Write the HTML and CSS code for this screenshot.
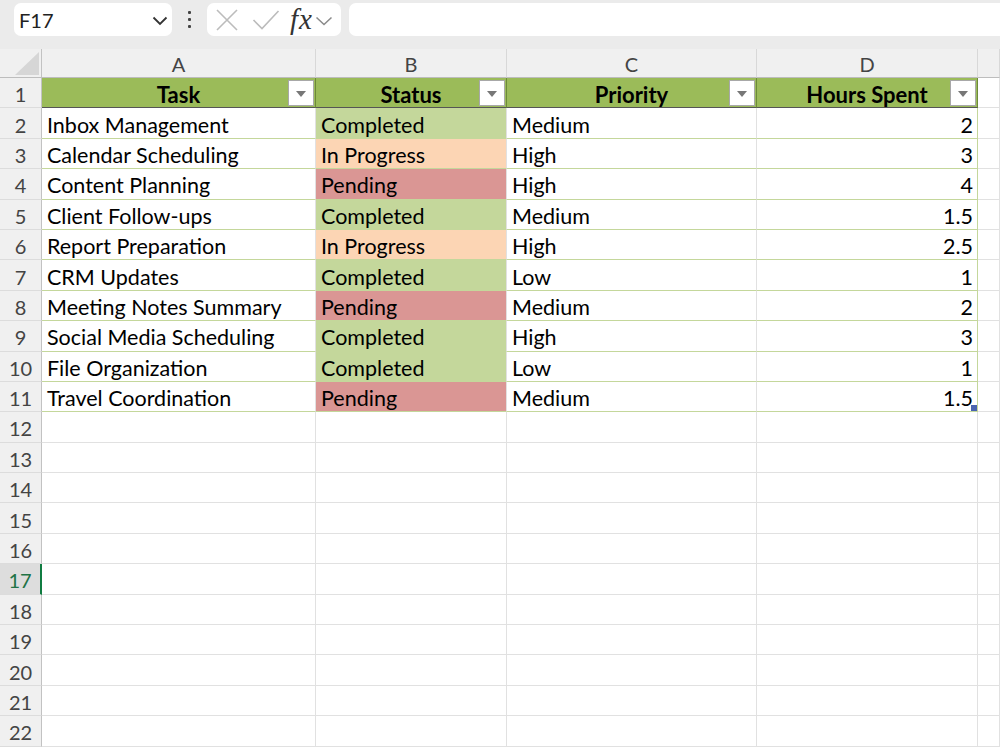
FILE: index.html
```html
<!DOCTYPE html>
<html lang="en">
<head>
    <meta charset="UTF-8">
    <meta name="viewport" content="width=device-width, initial-scale=1.0">
    <title>Task Tracker</title>
    <link rel="stylesheet" href="styles.css">
</head>
<body>
    <!-- formula bar -->
    <div class="toolbar">
        <div class="namebox">
            <span>F17</span>
            <svg class="chev" width="16" height="10" viewBox="0 0 16 10"><path d="M1.5 1.5 L8 8 L14.5 1.5" fill="none" stroke="#333" stroke-width="1.8"/></svg>
        </div>
        <div class="more"><i></i><i></i><i></i></div>
        <div class="fxbox">
            <svg class="ico" width="24" height="24" viewBox="0 0 24 24"><path d="M2 2 L22 22 M22 2 L2 22" stroke="#bcbcbc" stroke-width="1.6"/></svg>
            <svg class="ico" width="28" height="24" viewBox="0 0 28 24"><path d="M1.5 12 L10 20.5 L26.5 3" fill="none" stroke="#bcbcbc" stroke-width="1.6"/></svg>
            <span class="fx">fx</span>
            <svg class="ico small" width="18" height="10" viewBox="0 0 18 10"><path d="M1.5 1.5 L9 8.5 L16.5 1.5" fill="none" stroke="#8a8a8a" stroke-width="1.5"/></svg>
        </div>
        <div class="fbar"></div>
    </div>

    <!-- grid -->
    <div class="sheet">
        <div class="row colhead">
            <div class="rh corner"></div>
            <div class="cell col-a">A</div>
            <div class="cell col-b">B</div>
            <div class="cell col-c">C</div>
            <div class="cell col-d">D</div>
            <div class="cell col-e"></div>
        </div>
        <div class="row">
            <div class="rh">1</div>
            <div class="cell col-a th">Task<span class="filter"></span></div>
            <div class="cell col-b th">Status<span class="filter"></span></div>
            <div class="cell col-c th">Priority<span class="filter"></span></div>
            <div class="cell col-d th">Hours Spent<span class="filter"></span></div>
            <div class="cell col-e"></div>
        </div>
        <div class="row">
            <div class="rh">2</div>
            <div class="cell col-a td">Inbox Management</div>
            <div class="cell col-b td done">Completed</div>
            <div class="cell col-c td">Medium</div>
            <div class="cell col-d td num">2</div>
            <div class="cell col-e"></div>
        </div>
        <div class="row">
            <div class="rh">3</div>
            <div class="cell col-a td">Calendar Scheduling</div>
            <div class="cell col-b td prog">In Progress</div>
            <div class="cell col-c td">High</div>
            <div class="cell col-d td num">3</div>
            <div class="cell col-e"></div>
        </div>
        <div class="row">
            <div class="rh">4</div>
            <div class="cell col-a td">Content Planning</div>
            <div class="cell col-b td pend">Pending</div>
            <div class="cell col-c td">High</div>
            <div class="cell col-d td num">4</div>
            <div class="cell col-e"></div>
        </div>
        <div class="row">
            <div class="rh">5</div>
            <div class="cell col-a td">Client Follow-ups</div>
            <div class="cell col-b td done">Completed</div>
            <div class="cell col-c td">Medium</div>
            <div class="cell col-d td num">1.5</div>
            <div class="cell col-e"></div>
        </div>
        <div class="row">
            <div class="rh">6</div>
            <div class="cell col-a td">Report Preparation</div>
            <div class="cell col-b td prog">In Progress</div>
            <div class="cell col-c td">High</div>
            <div class="cell col-d td num">2.5</div>
            <div class="cell col-e"></div>
        </div>
        <div class="row">
            <div class="rh">7</div>
            <div class="cell col-a td">CRM Updates</div>
            <div class="cell col-b td done">Completed</div>
            <div class="cell col-c td">Low</div>
            <div class="cell col-d td num">1</div>
            <div class="cell col-e"></div>
        </div>
        <div class="row">
            <div class="rh">8</div>
            <div class="cell col-a td">Meeting Notes Summary</div>
            <div class="cell col-b td pend">Pending</div>
            <div class="cell col-c td">Medium</div>
            <div class="cell col-d td num">2</div>
            <div class="cell col-e"></div>
        </div>
        <div class="row">
            <div class="rh">9</div>
            <div class="cell col-a td">Social Media Scheduling</div>
            <div class="cell col-b td done">Completed</div>
            <div class="cell col-c td">High</div>
            <div class="cell col-d td num">3</div>
            <div class="cell col-e"></div>
        </div>
        <div class="row">
            <div class="rh">10</div>
            <div class="cell col-a td">File Organization</div>
            <div class="cell col-b td done">Completed</div>
            <div class="cell col-c td">Low</div>
            <div class="cell col-d td num">1</div>
            <div class="cell col-e"></div>
        </div>
        <div class="row">
            <div class="rh">11</div>
            <div class="cell col-a td">Travel Coordination</div>
            <div class="cell col-b td pend">Pending</div>
            <div class="cell col-c td">Medium</div>
            <div class="cell col-d td num last">1.5</div>
            <div class="cell col-e"></div>
        </div>
        <div class="row">
            <div class="rh">12</div>
            <div class="cell col-a"></div><div class="cell col-b"></div><div class="cell col-c"></div><div class="cell col-d"></div><div class="cell col-e"></div>
        </div>
        <div class="row">
            <div class="rh">13</div>
            <div class="cell col-a"></div><div class="cell col-b"></div><div class="cell col-c"></div><div class="cell col-d"></div><div class="cell col-e"></div>
        </div>
        <div class="row">
            <div class="rh">14</div>
            <div class="cell col-a"></div><div class="cell col-b"></div><div class="cell col-c"></div><div class="cell col-d"></div><div class="cell col-e"></div>
        </div>
        <div class="row">
            <div class="rh">15</div>
            <div class="cell col-a"></div><div class="cell col-b"></div><div class="cell col-c"></div><div class="cell col-d"></div><div class="cell col-e"></div>
        </div>
        <div class="row">
            <div class="rh">16</div>
            <div class="cell col-a"></div><div class="cell col-b"></div><div class="cell col-c"></div><div class="cell col-d"></div><div class="cell col-e"></div>
        </div>
        <div class="row">
            <div class="rh sel">17</div>
            <div class="cell col-a"></div><div class="cell col-b"></div><div class="cell col-c"></div><div class="cell col-d"></div><div class="cell col-e"></div>
        </div>
        <div class="row">
            <div class="rh">18</div>
            <div class="cell col-a"></div><div class="cell col-b"></div><div class="cell col-c"></div><div class="cell col-d"></div><div class="cell col-e"></div>
        </div>
        <div class="row">
            <div class="rh">19</div>
            <div class="cell col-a"></div><div class="cell col-b"></div><div class="cell col-c"></div><div class="cell col-d"></div><div class="cell col-e"></div>
        </div>
        <div class="row">
            <div class="rh">20</div>
            <div class="cell col-a"></div><div class="cell col-b"></div><div class="cell col-c"></div><div class="cell col-d"></div><div class="cell col-e"></div>
        </div>
        <div class="row">
            <div class="rh">21</div>
            <div class="cell col-a"></div><div class="cell col-b"></div><div class="cell col-c"></div><div class="cell col-d"></div><div class="cell col-e"></div>
        </div>
        <div class="row">
            <div class="rh">22</div>
            <div class="cell col-a"></div><div class="cell col-b"></div><div class="cell col-c"></div><div class="cell col-d"></div><div class="cell col-e"></div>
        </div>
    </div>
</body>
</html>
```

FILE: styles.css
```css
*{ margin: 0; padding: 0; box-sizing: border-box;}
body{ width: 1000px; height: 750px; overflow: hidden; background: #fff; color: #000; font-family: Lato, "Liberation Sans", sans-serif;}

/* formula bar */
.toolbar{ height: 49px; background: #ebebeb; display: flex; align-items: flex-start; padding: 3px 0 0 14px;}
.namebox{ width: 158px; height: 33px; background: #fff; border-radius: 7px; display: flex; align-items: center; justify-content: space-between; padding: 0 4px 0 5px; font-size: 20px; color: #222;}
.namebox .chev{ margin-top: 2px;}
.more{ width: 35px; height: 33px; display: flex; flex-direction: column; align-items: center; justify-content: center; gap: 4px;}
.more i{ width: 3px; height: 3px; background: #444; border-radius: 1px;}
.fxbox{ width: 134px; height: 33px; background: #fff; border-radius: 7px; display: flex; align-items: center; padding: 0 3px 0 8px;}
.fxbox .ico{ flex: none;}
.fxbox .ico + .ico{ margin-left: 13px;}
.fxbox .fx{ margin-left: 10px; font-family: "Liberation Serif", serif; font-style: italic; font-size: 29px; color: #333; line-height: 1; letter-spacing: 1px;}
.fxbox .small{ margin-left: 2px; margin-top: 2px;}
.fbar{ flex: 1; height: 33px; margin-left: 8px; margin-right: -10px; background: #fff; border-radius: 7px;}

/* sheet grid */
.row{ display: flex; height: 30.4px;}
.rh{ width: 42px; flex: none; background: #f0f0f0; border-right: 1px solid #c2c2c2; border-bottom: 1px solid #dcdcdc; display: flex; align-items: center; justify-content: center; padding-top: 3px; font-size: 20px; color: #444;}
.rh.sel{ background: #dddddd; color: #217346; border-right: 2px solid #107c41;}
.cell{ flex: none; border-right: 1px solid #e1e1e1; border-bottom: 1px solid #e1e1e1; display: flex; align-items: center; padding: 3px 5px 0; font-size: 21.5px; white-space: nowrap; overflow: hidden; position: relative;}
.col-a{ width: 274px;}
.col-b{ width: 191px;}
.col-c{ width: 250px;}
.col-d{ width: 221px;}
.col-e{ flex: 1;}

.colhead{ height: 29px;}
.colhead .rh{ border-bottom-color: #bdbdbd; position: relative;}
.colhead .cell{ background: #f0f0f0; border-right-color: #d8d8d8; border-bottom-color: #bdbdbd; justify-content: center; padding-top: 1px; font-size: 20px; color: #444;}
.corner::after{ content: ""; position: absolute; right: 2px; bottom: 2px; width: 24px; height: 23px; background: #d6d6d6; clip-path: polygon(100% 0, 100% 100%, 0 100%);}

/* table */
.th{ background: #9bbb59; font-weight: 700; font-size: 22px; justify-content: center; border-bottom-color: #555; border-right-color: #6d8a3a;}
.filter{ position: absolute; right: 1px; top: 2px; width: 26px; height: 26px; background: #fff; border: 1px solid #a8a8a8;}
.filter::after{ content: ""; position: absolute; left: 7px; top: 10px; border-top: 6px solid #777; border-left: 5px solid transparent; border-right: 5px solid transparent;}
.td{ border-bottom-color: #c4d79b;}
.td.col-d{ border-right-color: #c4d79b;}
.num{ justify-content: flex-end; padding-right: 4px;}
.done{ background: #c4d79b;}
.prog{ background: #fcd5b4;}
.pend{ background: #da9694;}
.last::after{ content: ""; position: absolute; right: 0; bottom: 0; width: 6px; height: 6px; background: #4a64b0;}
```
